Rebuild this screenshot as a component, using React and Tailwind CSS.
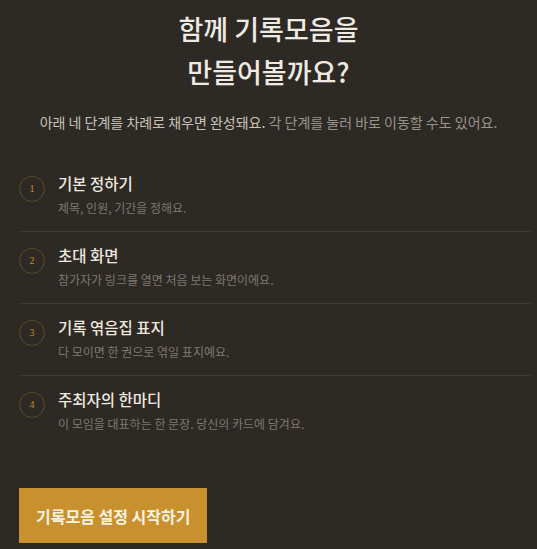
const font = { fontFamily: '"Noto Sans CJK KR", "Noto Sans", sans-serif' }

const steps = [
    { n: '1', title: '기본 정하기', desc: '제목, 인원, 기간을 정해요.' },
    { n: '2', title: '초대 화면', desc: '참가자가 링크를 열면 처음 보는 화면이에요.' },
    { n: '3', title: '기록 엮음집 표지', desc: '다 모이면 한 권으로 엮일 표지예요.' },
    { n: '4', title: '주최자의 한마디', desc: '이 모임을 대표하는 한 문장. 당신의 카드에 담겨요.' },
]

export default function App() {
    return (
        <div
            className="min-h-screen w-full bg-[#2d2925] text-[#ece6dc] font-['Noto_Sans_CJK_KR','Noto_Sans',sans-serif]"
            style={font}
        >
            <div className="pt-[7px] text-center">
                <h1 className="text-[27px] leading-[43px] font-medium text-[#efeae2]">
                    함께 기록모음을
                    <br />
                    만들어볼까요?
                </h1>
                <p className="mt-[19px] text-[14px] leading-[20px] text-[#9a938a]">
                    <span className="text-[#c9c2b8]">아래 네 단계를 차례로 채우면 완성돼요.</span> 각 단계를 눌러 바로 이동할 수도 있어요.
                </p>
            </div>

            <div className="ml-[19px] mr-[6px] mt-[28px]">
                {steps.map((s, i) => (
                    <div
                        key={s.n}
                        className={`flex items-start gap-[13px] h-[72px] pt-[16px] ${i < steps.length - 1 ? 'border-b border-[#3f392c]' : ''}`}
                    >
                        <div className="w-[26px] h-[26px] shrink-0 rounded-full border border-[#5e4a25] flex items-center justify-center">
                            <span className="text-[10px] leading-none text-[#c48f2c] font-['Liberation_Serif',serif]">
                                {s.n}
                            </span>
                        </div>
                        <div className="-mt-[4px]">
                            <div className="text-[15.5px] leading-[22px] font-medium text-[#eee8de]">{s.title}</div>
                            <div className="mt-[5px] text-[12px] leading-[18px] text-[#7d7770]">{s.desc}</div>
                        </div>
                    </div>
                ))}
            </div>

            <div className="ml-[19px] mt-[40px]">
                <button className="h-[55px] px-[17px] bg-[#c8912d] text-[16px] font-semibold text-[#fbf3e4]">
                    기록모음 설정 시작하기
                </button>
            </div>
        </div>
    )
}
